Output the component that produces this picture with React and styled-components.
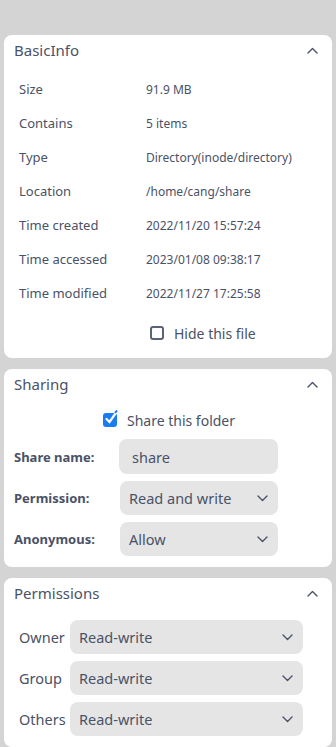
import styled, { createGlobalStyle } from "styled-components";

const GlobalStyle = createGlobalStyle`
  body {
    margin: 0;
    background: #d4d4d4;
    font-family: "Noto Sans", "Open Sans", sans-serif;
    color: #4a5267;
  }
`;

const Page = styled.div`
  display: flex;
  flex-direction: column;
  gap: 11px;
  padding: 35px 4px 20px;
`;

const Card = styled.section`
  background: #ffffff;
  border-radius: 8px;
  padding-bottom: ${(p) => p.$pb || 8}px;
`;

const Header = styled.div`
  display: flex;
  align-items: center;
  justify-content: space-between;
  height: 30px;
  padding: 0 14px 0 10px;
  font-size: 15px;
`;

const InfoList = styled.div`
  padding: 7px 15px 0;
`;

const InfoRow = styled.div`
  display: grid;
  grid-template-columns: 127px 1fr;
  align-items: center;
  height: 34px;
  margin-top: ${(p) => p.$mt || 0}px;
`;

const InfoLabel = styled.span`
  font-size: 13px;
`;

const InfoValue = styled.span`
  font-size: 12px;
`;

const CheckRow = styled.label`
  display: flex;
  align-items: center;
  gap: 10px;
  font-size: 14px;
  justify-content: ${(p) => (p.$center ? "center" : "flex-start")};
  height: ${(p) => p.$h || 34}px;
  margin-left: ${(p) => p.$ml || 0}px;
  margin-right: ${(p) => p.$mr || 0}px;
`;

const Box = styled.span`
  position: relative;
  width: 14px;
  height: 14px;
  box-sizing: border-box;
  border-radius: 3px;
  border: ${(p) => (p.$checked ? "none" : "2px solid #5b6273")};
  background: ${(p) => (p.$checked ? "#1a7cf0" : "#fff")};
  flex-shrink: 0;
`;

const Tick = styled.svg`
  position: absolute;
  left: 1px;
  top: -3px;
`;

const FormList = styled.div`
  display: flex;
  flex-direction: column;
  gap: 7px;
  padding: ${(p) => p.$pt || 0}px 0 0 ${(p) => p.$pl || 10}px;
`;

const FormRow = styled.div`
  display: grid;
  grid-template-columns: ${(p) => p.$col}px ${(p) => p.$w}px;
  align-items: center;
`;

const BoldLabel = styled.span`
  font-size: 13px;
  font-weight: 700;
`;

const PlainLabel = styled.span`
  font-size: 14.5px;
`;

const Field = styled.div`
  display: flex;
  align-items: center;
  justify-content: space-between;
  height: ${(p) => p.$h || 34}px;
  box-sizing: border-box;
  padding: 0 10px 0 ${(p) => p.$pl || 9}px;
  background: #e5e5e5;
  border-radius: 8px;
  font-size: 14.5px;
`;

const Chevron = ({ up }) => (
  <svg width="11" height="7" viewBox="0 0 11 7" fill="none">
    <path
      d={up ? "M1 6 L5.5 1.5 L10 6" : "M1 1 L5.5 5.5 L10 1"}
      stroke="#4a5267"
      strokeWidth="1.4"
      strokeLinecap="round"
      strokeLinejoin="round"
    />
  </svg>
);

const info = [
  ["Size", "91.9 MB"],
  ["Contains", "5 items"],
  ["Type", "Directory(inode/directory)"],
  ["Location", "/home/cang/share"],
  ["Time created", "2022/11/20 15:57:24"],
  ["Time accessed", "2023/01/08 09:38:17"],
  ["Time modified", "2022/11/27 17:25:58"],
];

export default function App() {
  return (
    <>
      <GlobalStyle />
      <Page>
        <Card>
          <Header>
            BasicInfo
            <Chevron up />
          </Header>
          <InfoList>
            {info.map(([k, v]) => (
              <InfoRow key={k}>
                <InfoLabel>{k}</InfoLabel>
                <InfoValue>{v}</InfoValue>
              </InfoRow>
            ))}
            <InfoRow $mt={6}>
              <span />
              <CheckRow $ml={4}>
                <Box />
                Hide this file
              </CheckRow>
            </InfoRow>
          </InfoList>
        </Card>

        <Card $pb={11}>
          <Header>
            Sharing
            <Chevron up />
          </Header>
          <FormList $pt={9}>
            <CheckRow $center $h={24} $ml={-4} $mr={4}>
              <Box $checked>
                <Tick width="15" height="15" viewBox="0 0 15 15">
                  <path
                    d="M2.5 9 L5.5 12 L12.5 2"
                    stroke="#fff"
                    strokeWidth="2.2"
                    fill="none"
                    strokeLinecap="round"
                  />
                  <path d="M11 3 L13 0.5" stroke="#1a7cf0" strokeWidth="2" />
                </Tick>
              </Box>
              Share this folder
            </CheckRow>
            <FormRow $col={105} $w={159}>
              <BoldLabel>Share name:</BoldLabel>
              <Field $h={35} $pl={13}>share</Field>
            </FormRow>
            <FormRow $col={106} $w={158}>
              <BoldLabel>Permission:</BoldLabel>
              <Field>
                Read and write
                <Chevron />
              </Field>
            </FormRow>
            <FormRow $col={106} $w={158}>
              <BoldLabel>Anonymous:</BoldLabel>
              <Field>
                Allow
                <Chevron />
              </Field>
            </FormRow>
          </FormList>
        </Card>

        <Card $pb={11}>
          <Header>
            Permissions
            <Chevron up />
          </Header>
          <FormList $pt={12} $pl={15}>
            {["Owner", "Group", "Others"].map((r) => (
              <FormRow key={r} $col={51} $w={233}>
                <PlainLabel>{r}</PlainLabel>
                <Field>
                  Read-write
                  <Chevron />
                </Field>
              </FormRow>
            ))}
          </FormList>
        </Card>
      </Page>
    </>
  );
}
